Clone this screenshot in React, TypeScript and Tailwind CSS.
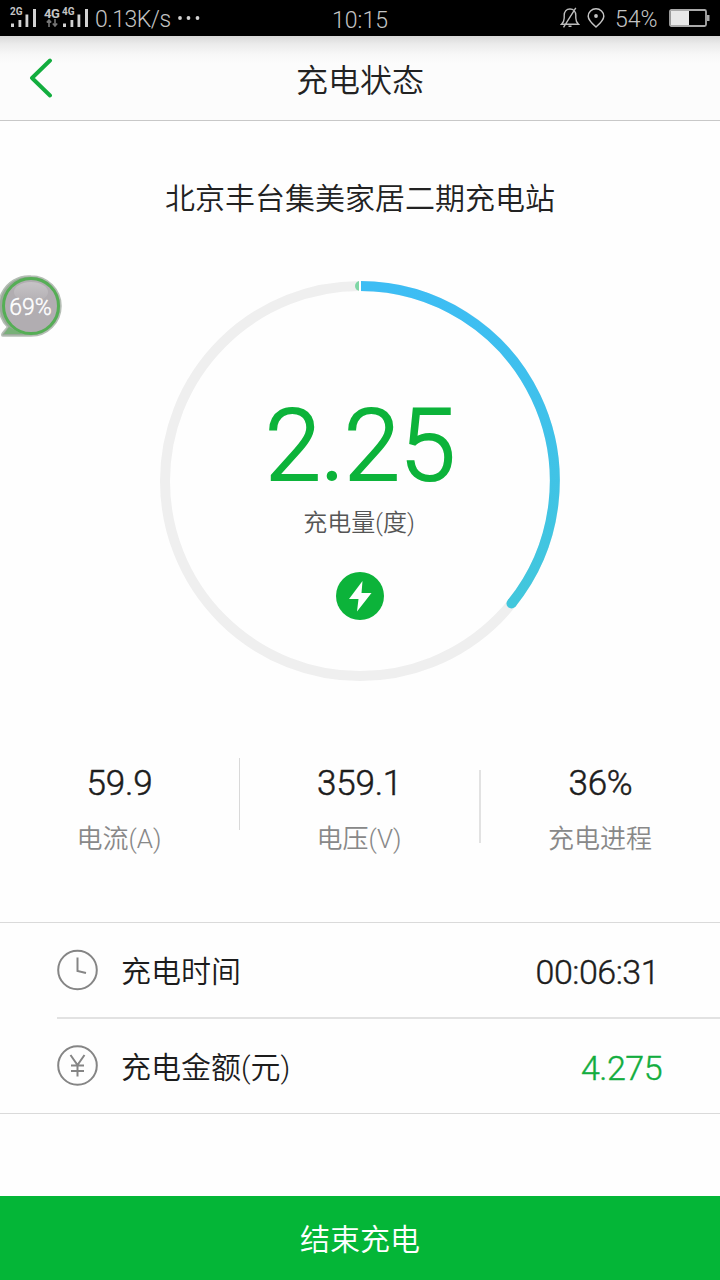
import React from "react";

const SANS = "font-['Roboto','Noto_Sans_CJK_SC',sans-serif] font-[350]";

function SignalBars() {
  return (
    <svg className="block h-[20px] w-[27px]" viewBox="0 0 27 20" fill="#d2d2d2">
      <rect x="1" y="15.5" width="3" height="3.5" />
      <rect x="8.5" y="12" width="2.8" height="7" />
      <rect x="15.5" y="6.5" width="2.8" height="12.5" />
      <rect x="23" y="1" width="3" height="18" />
    </svg>
  );
}

function StatusBar() {
  return (
    <div className="grid h-9 shrink-0 grid-cols-3 items-center bg-black text-[#c4c4c4]">
      <div className="flex h-9 items-center pl-[10px]">
        <div className="relative w-[27px]">
          <SignalBars />
          <span className="absolute top-[-1px] left-0 text-[10px] leading-[10px] font-bold">2G</span>
        </div>
        <div className="relative ml-[7px] h-5 w-[18px]">
          <span className="absolute -top-px left-0 text-[13px] leading-[13px] font-bold tracking-[-0.5px]">4G</span>
          <svg className="absolute top-[11px] left-[2px] h-[8px] w-[12px]" viewBox="0 0 12 8" fill="none" stroke="#777" strokeWidth="1.6">
            <path d="M3 8V1.5M.8 3.5 3 1l2.2 2.5M9 0v6.5M6.8 4.5 9 7l2.2-2.5" />
          </svg>
        </div>
        <div className="relative w-[27px]">
          <SignalBars />
          <span className="absolute top-[-1px] left-0 text-[10px] leading-[10px] font-bold">4G</span>
        </div>
        <span className="ml-[6px] w-[75px] pt-[3px] text-[23px] leading-[30px] font-light tracking-[-0.5px] whitespace-nowrap">0.13K/s</span>
        <svg className="ml-[7px] h-[6px] w-[24px]" viewBox="0 0 24 6" fill="#d2d2d2">
          <circle cx="3" cy="3" r="1.9" />
          <circle cx="11.5" cy="3" r="1.9" />
          <circle cx="20.5" cy="3" r="1.9" />
        </svg>
      </div>
      <div className="pt-[5px] text-center text-[23px] leading-[30px] font-light">10:15</div>
      <div className="flex h-9 items-center justify-end pr-[10px]">
        <svg className="h-[22px] w-[20px]" viewBox="0 0 20 22" fill="none" stroke="#bdbdbd" strokeWidth="1.4">
          <path d="M1.500 17.300h17c-2-1.800-2.700-3.400-2.700-6.300V8.500C15.800 4.700 13.500 2 10 2S4.200 4.700 4.200 8.500V11c0 2.900-.7 4.500-2.700 6.300ZM8.500 19.300h3M15.800.8 3.500 20.300" />
        </svg>
        <svg className="ml-[7px] h-[20px] w-[18px]" viewBox="0 0 18 20" fill="none" stroke="#c4c4c4" strokeWidth="1.5">
          <path d="M9 19C5 15.500 1.200 12 1.200 8.200a7.800 7.400 0 0 1 15.600 0C16.800 12 13 15.500 9 19Z" />
          <circle cx="9" cy="8" r="1.900" fill="#c4c4c4" stroke="none" />
        </svg>
        <span className="ml-[10px] w-[44px] pt-[3px] text-[23px] leading-[30px] font-light">54%</span>
        <svg className="ml-[10px] h-[18px] w-[41px]" viewBox="0 0 41 18" fill="none">
          <rect x="1" y="1" width="36" height="16" rx="1.500" stroke="#aaa" strokeWidth="1.800" />
          <rect x="2" y="2" width="18" height="14" fill="#e8e8e8" />
          <rect x="38" y="6" width="2.500" height="6" fill="#aaa" />
        </svg>
      </div>
    </div>
  );
}

function Header() {
  return (
    <div className="flex h-[85px] shrink-0 items-center border-b border-[#c8c8c8] bg-[linear-gradient(to_bottom,#d9d9d9_0px,#ebebeb_8px,#f7f7f7_18px,#fcfcfc_28px)]">
      <div className="w-[120px] pl-[29px]">
        <svg className="h-[40px] w-[24px]" viewBox="0 0 24 40" fill="none" stroke="#12ad3e" strokeWidth="3.900" strokeLinecap="round" strokeLinejoin="round">
          <path d="M21 2.500 3 20l18 17.500" />
        </svg>
      </div>
      <h1 className="flex-1 pt-[5px] text-center text-[32px] leading-[40px] font-[350] text-[#222]">充电状态</h1>
      <div className="w-[120px]" />
    </div>
  );
}

function FloatingBall() {
  return (
    <div className="absolute top-[274px] left-0 h-[66px] w-[64px]">
      <svg className="block h-[66px] w-[64px]" viewBox="0 0 64 66">
        <defs>
          <linearGradient id="gloss" x1="0" y1="0" x2="0" y2="1">
            <stop offset="0" stopColor="#d2d0d2" />
            <stop offset="1" stopColor="#b4b0b4" />
          </linearGradient>
        </defs>
        <path d="M31 2a30 30 0 1 1 0 60H3c-1.500 0-1.500-1.500-.5-3l5-6A30 30 0 0 1 31 2Z" fill="#9aa99a" stroke="#b5beb5" strokeWidth="1.500" />
        <path d="M4 60 9 53l13 7Z" fill="#78b078" />
        <circle cx="31" cy="32" r="27.500" fill="#b1adb1" stroke="#55ae55" strokeWidth="3" />
        <ellipse cx="31" cy="18" rx="17" ry="10" fill="url(#gloss)" opacity=".65" />
      </svg>
      <span className="absolute top-[20px] left-0 w-[61px] text-center text-[23px] leading-[28px] text-white [-webkit-text-stroke:0.4px_#fff]">69%</span>
    </div>
  );
}

function Gauge() {
  return (
    <div className="relative mx-auto mt-[61px] h-[402px] w-[402px] shrink-0">
      <svg className="absolute inset-0 h-[402px] w-[402px]" viewBox="0 0 402 402" fill="none">
        <defs>
          <linearGradient id="arc" x1="0" y1="0" x2="0" y2="1">
            <stop offset="0" stopColor="#3dbdf4" />
            <stop offset="1" stopColor="#42c7dc" />
          </linearGradient>
        </defs>
        <circle cx="201" cy="201" r="195" stroke="#efefef" strokeWidth="10" />
        <path d="M201 1a5 5 0 0 0 0 10Z" fill="#7fd6a5" />
        <path d="M201 6A195 195 0 0 1 352.500 323.500" stroke="url(#arc)" strokeWidth="10" />
        <circle cx="352.500" cy="323.500" r="5" fill="#42c7dc" />
        <rect x="200" y="0" width="2" height="12" fill="#fff" />
      </svg>
      <div className="relative flex h-full flex-col items-center pt-[106px]">
        <div className="text-[101px] leading-[120px] font-light tracking-[-0.5px] text-[#0cb33a] [-webkit-text-stroke:2px_#0cb33a]">2.25</div>
        <div className="mt-[1px] mr-[2px] text-[24px] leading-[32px] text-[#555]">充电量(度)</div>
        <svg className="mt-[33px] mr-px h-[48px] w-[48px]" viewBox="0 0 48 48">
          <circle cx="24" cy="24" r="24" fill="#0cb33a" />
          <path d="M26.500 9 13 27h9.500l-1.500 12.500L35.500 21H25.500Z" fill="#fff" />
        </svg>
      </div>
    </div>
  );
}

function Stat({ value, label }: { value: string; label: string }) {
  return (
    <div className="flex flex-1 flex-col items-center pt-[4px]">
      <div className="text-[35px] leading-[44px] tracking-[-0.2px] text-[#1c1c1c] [-webkit-text-stroke:0.5px_#1c1c1c]">{value}</div>
      <div className="mt-[15px] mr-px text-[26px] leading-[36px] text-[#888]">{label}</div>
    </div>
  );
}

function Stats() {
  return (
    <div className="mt-[76px] flex h-[164px] shrink-0">
      <Stat value="59.9" label="电流(A)" />
      <div className="h-[72px] w-px bg-[#d9d9d9]" />
      <Stat value="359.1" label="电压(V)" />
      <div className="mt-3 h-[73px] w-[2px] bg-[#e2e2e2]" />
      <Stat value="36%" label="充电进程" />
    </div>
  );
}

function ClockIcon() {
  return (
    <svg className="h-[42px] w-[42px]" viewBox="0 0 42 42" fill="none" stroke="#858585" strokeWidth="2">
      <circle cx="20.500" cy="21" r="19.300" />
      <path d="M20.500 8.500V22l8.500 2" />
    </svg>
  );
}

function YuanIcon() {
  return (
    <svg className="h-[42px] w-[42px]" viewBox="0 0 42 42" fill="none" stroke="#858585" strokeWidth="2">
      <circle cx="20.500" cy="20.500" r="19.300" />
      <path d="m13.500 10 7 10 7-10M20.500 20v11.500M14 20.500h13M14 26h13" />
    </svg>
  );
}

function Details() {
  return (
    <div className="shrink-0 border-y border-[#dadada]">
      <div className="ml-[57px] flex h-[96px] items-center border-b-2 border-[#e2e2e2]">
        <ClockIcon />
        <span className="ml-[22px] flex-1 pt-[4px] text-[30px] leading-[40px] text-[#1c1c1c]">充电时间</span>
        <span className="pt-[4px] pr-[61px] text-[34px] leading-[40px] tracking-[-0.5px] text-[#1c1c1c] [-webkit-text-stroke:0.4px_#1c1c1c]">00:06:31</span>
      </div>
      <div className="ml-[57px] flex h-[94px] items-center">
        <YuanIcon />
        <span className="ml-[22px] flex-1 pt-[4px] text-[30px] leading-[40px] text-[#1c1c1c]">充电金额(元)</span>
        <span className="pt-[3px] pr-[58px] text-[34px] leading-[40px] tracking-[-0.5px] text-[#12ad3e] [-webkit-text-stroke:0.4px_#12ad3e]">4.275</span>
      </div>
    </div>
  );
}

export default function App() {
  return (
    <div className={`relative flex h-[1280px] w-[720px] flex-col overflow-hidden bg-[#fefefe] ${SANS}`}>
      <StatusBar />
      <Header />
      <h2 className="mt-[58px] shrink-0 text-center text-[30px] leading-[40px] font-[350] text-[#222]">北京丰台集美家居二期充电站</h2>
      <Gauge />
      <Stats />
      <Details />
      <button className="mt-auto h-[84px] shrink-0 bg-[#04b637] pt-[4px] text-[30px] leading-[40px] font-[350] text-white">结束充电</button>
      <FloatingBall />
    </div>
  );
}
